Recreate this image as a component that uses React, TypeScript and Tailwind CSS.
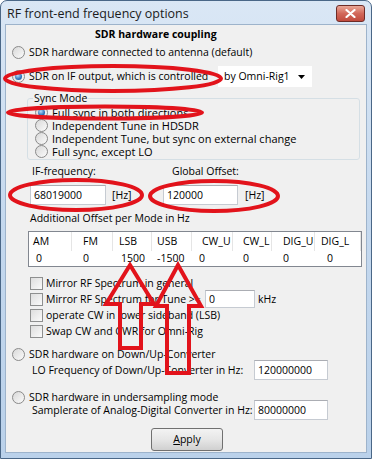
import React from "react";

function Radio({ checked = false }: { checked?: boolean }) {
  return (
    <span className="inline-flex h-[13px] w-[13px] shrink-0 items-center justify-center rounded-full border border-[#8a8a8a] bg-linear-to-br from-[#d8d8d8] to-[#fbfbfb]">
      {checked && (
        <span className="h-[7px] w-[7px] rounded-full bg-[radial-gradient(circle_at_40%_35%,#b4dcfb,#2e74bb_60%,#184c8c)]" />
      )}
    </span>
  );
}

function Check() {
  return (
    <span className="inline-block h-[13px] w-[13px] shrink-0 border border-[#8e8f8f] bg-linear-to-br from-[#dedede] to-[#fafafa]" />
  );
}

function Field({ value, className }: { value: string; className: string }) {
  return (
    <div
      className={
        "flex h-[20px] items-center border border-[#c6cbd2] border-t-[#abadb3] bg-white pl-[3px] " + className
      }
    >
      {value}
    </div>
  );
}

const modes = [
  { h: "AM", v: "0", hp: "pl-[4px]", vp: "pl-[7px]" },
  { h: "FM", v: "0", hp: "pl-[11px]", vp: "pl-[11px]" },
  { h: "LSB", v: "1500", hp: "pl-[6px]", vp: "pl-[8px]" },
  { h: "USB", v: "-1500", hp: "pl-[5px]", vp: "pl-[5px]" },
  { h: "CW_U", v: "0", hp: "pl-[10px]", vp: "pl-[7px]" },
  { h: "CW_L", v: "0", hp: "pl-[10px]", vp: "pl-[10px]" },
  { h: "DIG_U", v: "0", hp: "pl-[11px]", vp: "pl-[11px]" },
  { h: "DIG_L", v: "0", hp: "pl-[6px]", vp: "pl-[12px]" },
];

function Annotations() {
  return (
    <svg
      className="pointer-events-none absolute inset-0"
      width="372"
      height="459"
      viewBox="0 0 372 459"
      fill="none"
      stroke="#e2131b"
      strokeWidth="4"
    >
      <ellipse cx="112" cy="77.5" rx="108" ry="12.5" />
      <ellipse cx="104" cy="111.5" rx="97" ry="6" />
      <ellipse cx="75" cy="194" rx="66" ry="15" />
      <ellipse cx="213" cy="195" rx="64" ry="15" />
      <path d="M129 264 L153 303 L140 303 L140 347 L119 347 L119 303 L105 303 Z" />
      <path d="M177 264 L200 305 L188 305 L188 372 L166 372 L166 305 L155 305 Z" />
    </svg>
  );
}

export default function App() {
  return (
    <div className="relative h-[459px] w-[372px] overflow-hidden rounded-t-[7px] border border-[#4a6787] bg-linear-to-b from-[#dae7f5] via-[#c4d8ee] to-[#bad1ea] font-['Open_Sans',sans-serif] text-[10.5px] leading-[15px] text-black">
      {/* title bar */}
      <div className="flex h-[24px] items-center justify-between pl-[6px] pr-[6px]">
        <span className="text-[12.5px] text-[#1b1b1b]">RF front-end frequency options</span>
        <div className="flex h-[17px] w-[29px] items-center justify-center rounded-[3px] border border-[#6e2c27] bg-linear-to-b from-[#e9a899] via-[#d2685a] to-[#c14a3d]">
          <svg width="11" height="9" viewBox="0 0 11 9">
            <path d="M1.5 1 L9.5 8 M9.5 1 L1.5 8" stroke="#fff" strokeWidth="2.2" strokeLinecap="round" />
          </svg>
        </div>
      </div>

      {/* client area */}
      <div className="ml-[5px] flex h-[427px] w-[360px] flex-col bg-[#f0f0f0] shadow-[0_0_0_1px_#9db3cb]">
        <div className="mt-[2px] h-[15px] pl-[89px] font-bold">SDR hardware coupling</div>

        <div className="mt-[2px] flex h-[16px] items-center gap-[4px] pl-[6px]">
          <Radio />
          <span>SDR hardware connected to antenna (default)</span>
        </div>

        <div className="mt-[6px] flex h-[21px] items-center pl-[6px]">
          <Radio checked />
          <span className="ml-[4px] w-[189px]">SDR on IF output, which is controlled</span>
          <div className="flex h-[21px] w-[94px] items-center justify-between bg-white pl-[6px] pr-[7px]">
            <span>by Omni-Rig1</span>
            <svg width="7" height="4" viewBox="0 0 7 4">
              <path d="M0 0 H7 L3.5 4 Z" fill="#000" />
            </svg>
          </div>
        </div>

        <fieldset className="ml-[21px] mt-[4px] w-[333px] rounded-[3px] border border-[#d5dfe5] pb-[1px] pl-[7px]">
          <legend className="ml-[-2px] px-[1px]">Sync Mode</legend>
          {[
            "Full sync in both directions",
            "Independent Tune in HDSDR",
            "Independent Tune, but sync on external change",
            "Full sync, except LO",
          ].map((t, i) => (
            <div key={t} className="flex h-[13px] items-center gap-[4px] text-[11px] leading-[13px]">
              <Radio checked={i === 0} />
              <span>{t}</span>
            </div>
          ))}
        </fieldset>

        <div className="mt-[4px] flex h-[15px]">
          <span className="w-[166px] pl-[26px]">IF-frequency:</span>
          <span>Global Offset:</span>
        </div>

        <div className="mt-[6px] flex h-[20px] items-center">
          <Field value="68019000" className="ml-[24px] w-[76px]" />
          <span className="ml-[6px] w-[51px]">[Hz]</span>
          <Field value="120000" className="w-[75px]" />
          <span className="ml-[7px]">[Hz]</span>
        </div>

        <div className="mt-[6px] h-[15px] pl-[24px]">Additional Offset per Mode in Hz</div>

        <div className="ml-[22px] mt-[5px] w-[334px] border border-[#828790] bg-white">
          <div className="grid h-[19px] grid-cols-[43px_41px_39px_40px_41px_39px_43px_1fr]">
            {modes.map((m) => (
              <div key={m.h} className={"flex items-center border-r border-[#e5e5e5] " + m.hp}>
                {m.h}
              </div>
            ))}
          </div>
          <div className="grid h-[15px] grid-cols-[43px_41px_39px_40px_41px_39px_43px_1fr]">
            {modes.map((m) => (
              <div key={m.h} className={"flex items-center " + m.vp}>
                {m.v}
              </div>
            ))}
          </div>
        </div>

        <div className="mt-[8px] flex flex-col pl-[24px]">
          <div className="flex h-[16px] items-center gap-[3px]">
            <Check />
            <span>Mirror RF Spectrum in general</span>
          </div>
          <div className="flex h-[16px] items-center">
            <Check />
            <span className="ml-[3px] w-[159px]">Mirror RF Spectrum for Tune &gt;=</span>
            <div className="flex h-[18px] w-[50px] items-center border border-[#c6cbd2] border-t-[#abadb3] bg-white pl-[3px]">
              0
            </div>
            <span className="ml-[3px]">kHz</span>
          </div>
          <div className="flex h-[16px] items-center gap-[3px]">
            <Check />
            <span>operate CW in lower sideband (LSB)</span>
          </div>
          <div className="flex h-[16px] items-center gap-[3px]">
            <Check />
            <span>Swap CW and CWR for Omni-Rig</span>
          </div>
        </div>

        <div className="mt-[9px] flex h-[12px] items-center gap-[4px] pl-[6px]">
          <Radio />
          <span>SDR hardware on Down/Up-Converter</span>
        </div>
        <div className="flex h-[20px] items-center">
          <span className="w-[248px] pl-[26px]">LO Frequency of Down/Up-Converter in Hz:</span>
          <Field value="120000000" className="w-[74px]" />
        </div>

        <div className="mt-[11px] flex h-[12px] items-center gap-[4px] pl-[6px]">
          <Radio />
          <span>SDR hardware in undersampling mode</span>
        </div>
        <div className="mt-[-3px] flex h-[20px] items-center">
          <span className="w-[248px] pl-[26px]">Samplerate of Analog-Digital Converter in Hz:</span>
          <Field value="80000000" className="w-[74px]" />
        </div>

        <button className="ml-[145px] mt-[8px] flex h-[23px] w-[72px] items-center justify-center rounded-[3px] border border-[#707070] bg-linear-to-b from-[#f3f3f3] via-[#e6e6e6] to-[#d0d0d0]">
          <span>
            <span className="underline">A</span>pply
          </span>
        </button>
      </div>

      <Annotations />
    </div>
  );
}
